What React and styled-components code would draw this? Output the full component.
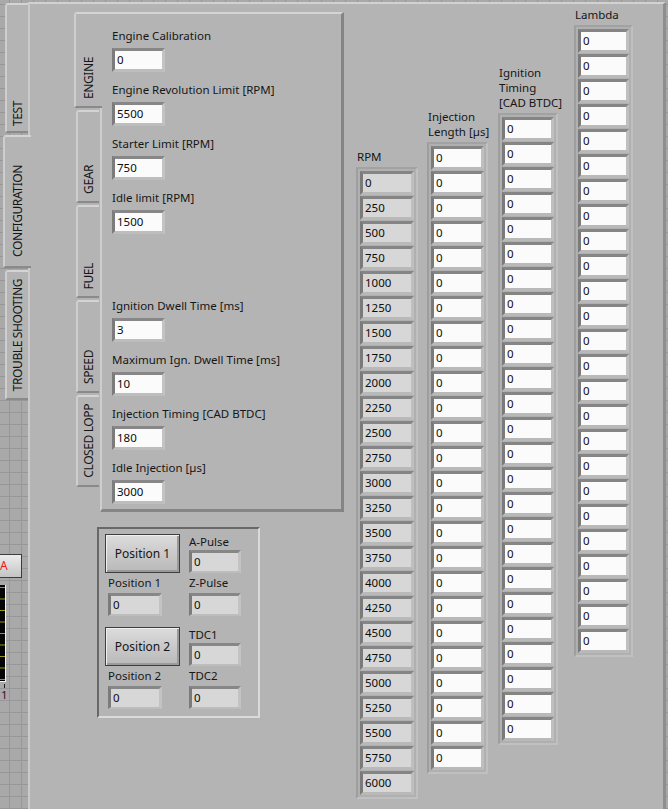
import React from 'react'
import styled, { createGlobalStyle } from 'styled-components'

const GlobalStyle = createGlobalStyle`
  html, body {
    margin: 0;
    padding: 0;
  }
  body {
    width: 668px;
    height: 809px;
    overflow: hidden;
    background-color: #a9a9a9;
    background-image:
      linear-gradient(#979797 1px, transparent 1px),
      linear-gradient(90deg, #979797 1px, transparent 1px);
    background-size: 12px 12px;
    background-position: 9px 4px;
    font-family: "Noto Sans", "Segoe UI", sans-serif;
    font-size: 11.5px;
    color: #161616;
  }
`

const Screen = styled.div`
  display: flex;
  width: 668px;
  height: 809px;
`

// left strip: outer tabs and the block diagram peeking out behind
const Side = styled.div`
  width: 28px;
  flex: none;
  display: flex;
  flex-direction: column;
  padding-top: 3px;
  box-sizing: border-box;
  position: relative;
  z-index: 1;
`

const Tab = styled.div`
  box-sizing: border-box;
  height: ${p => p.$h}px;
  margin: 0 ${p => (p.$active ? '-3px' : '0')} 2px ${p => (p.$active ? '3px' : '5px')};
  background: #b4b4b4;
  border-top: 2px solid #d4d4d4;
  border-left: 2px solid #cecece;
  border-bottom: 2px solid #8a8a8a;
  border-radius: 3px 0 0 2px;
  display: flex;
  flex-direction: column;
  justify-content: flex-end;
  align-items: center;
  padding-bottom: ${p => p.$pad || 6}px;
`

const TabText = styled.span`
  writing-mode: vertical-rl;
  transform: rotate(180deg);
  white-space: nowrap;
  line-height: 14px;
  font-size: 12px;
  letter-spacing: -0.4px;
`

// only the right end of this button shows, the rest is hidden behind the window edge
const RedButton = styled.div`
  margin-top: 152px;
  width: 22px;
  height: 24px;
  box-sizing: border-box;
  border: 1px solid #3c3c3c;
  border-left: none;
  background: linear-gradient(#ececec, #c4c4c4);
  color: #f01818;
  line-height: 22px;
  font-size: 12px;
  padding-left: 0;
`

const Graph = styled.div`
  margin-top: 7px;
  width: 5px;
  height: 96px;
  background-color: #050505;
  background-image: linear-gradient(#9c9a14 1px, transparent 1px);
  background-size: 5px 11.5px;
  background-position: 0 2px;
  border-right: 1px solid #f4f4f4;
  border-bottom: 1px solid #f4f4f4;
`

const Tick = styled.div`
  margin: 2px 0 0 4px;
  width: 1px;
  height: 4px;
  background: #222;
`

const TickLabel = styled.div`
  margin-left: 1px;
  line-height: 14px;
  color: #3a1030;
`

const MainPanel = styled.div`
  flex: 1;
  margin: 2px 2px 0 0;
  background: #b4b4b4;
  border-top: 2px solid #d2d2d2;
  border-left: 2px solid #cbcbcb;
  border-right: 3px solid #8e8e8e;
  display: flex;
  align-items: flex-start;
  padding-left: 44px;
`

const LeftCol = styled.div`
  margin-top: 8px;
  width: 270px;
  flex: none;
  display: flex;
  flex-direction: column;
`

const TabControl = styled.div`
  display: flex;
  height: 500px;
`

const InnerTabs = styled.div`
  width: 26px;
  flex: none;
  display: flex;
  flex-direction: column;
  position: relative;
  z-index: 1;
`

const InnerTab = styled(Tab)`
  margin: 0 ${p => (p.$active ? '-2px' : '1px')} 2px ${p => (p.$active ? '0' : '2px')};
`

const InnerPanel = styled.div`
  flex: 1;
  box-sizing: border-box;
  border-top: 2px solid #d4d4d4;
  border-left: 2px solid #cecece;
  border-right: 3px solid #858585;
  border-bottom: 3px solid #858585;
  padding: 14px 0 0 10px;
  display: grid;
  grid-auto-rows: 54px;
  align-content: start;
`

const Field = styled.div`
  display: flex;
  flex-direction: column;
  align-items: flex-start;
`

const Label = styled.div`
  line-height: 16px;
  white-space: nowrap;
  margin-bottom: ${p => p.$gap ?? 4}px;
`

const NumBox = styled.div`
  box-sizing: border-box;
  width: ${p => p.$w || 53}px;
  height: ${p => p.$h || 24}px;
  border-style: solid;
  border-width: 3px 3px ${p => (p.$h === 23 ? 2 : 3)}px 3px;
  border-color: #878787 #c3c3c3 #bdbdbd #7b7b7b;
  background: ${p => (p.$ind ? '#d7d7d7' : '#fbfbfb')};
  padding-left: 2px;
  line-height: 18px;
  color: #0c0c0c;
  font-size: 11.5px;
`

const PositionBox = styled.div`
  margin: 15px 0 0 23px;
  width: 163px;
  height: 191px;
  box-sizing: border-box;
  border: 2px solid;
  border-color: #686868 #dadada #dadada #686868;
  padding: 5px 0 0 6px;
  display: flex;
  flex-direction: column;
  gap: 11px;
`

const PairGrid = styled.div`
  display: grid;
  grid-template-columns: 75px 53px;
  grid-template-rows: 39px 43px;
  column-gap: 9px;
`

const Cell = styled.div`
  display: flex;
  flex-direction: column;
  justify-content: flex-end;
  padding-left: ${p => p.$indent || 0}px;
`

const PushButton = styled.div`
  box-sizing: border-box;
  border: 1px solid #3e3e3e;
  box-shadow: inset 1px 1px 0 #f0f0f0, inset -2px -2px 0 #9a9a9a;
  background: linear-gradient(#dcdcdc, #c6c6c6 60%, #b9b9b9);
  display: flex;
  align-items: center;
  justify-content: center;
  font-size: 12px;
`

const ArraysArea = styled.div`
  display: flex;
  align-items: flex-start;
  margin-left: 12px;
`

const ArrayCol = styled.div`
  display: flex;
  flex-direction: column;
  margin-top: ${p => p.$top}px;
  margin-left: ${p => p.$left || 0}px;
`

const ArrayLabel = styled.div`
  line-height: 15px;
  margin-bottom: 3px;
  padding-left: 1px;
  white-space: nowrap;
  width: 0;
`

const ArrayFrame = styled.div`
  border: 2px solid;
  border-color: #a2a2a2 #c0c0c0 #c0c0c0 #9e9e9e;
  background: #b0b0b0;
  padding: 2px;
  display: flex;
  flex-direction: column;
  gap: 1px;
`

const ArrayCell = styled(NumBox)`
  border-width: 3px 3px 3px 3px;
  border-color: #858585 #bfbfbf #b9b9b9 #7a7a7a;
`

const rpm = Array.from({ length: 25 }, (_, i) => i * 250)
const zeros = Array.from({ length: 25 }, () => 0)

const engineFields = [
  ['Engine Calibration', '0'],
  ['Engine Revolution Limit [RPM]', '5500'],
  ['Starter Limit [RPM]', '750'],
  ['Idle limit [RPM]', '1500'],
  null,
  ['Ignition Dwell Time [ms]', '3'],
  ['Maximum Ign. Dwell Time [ms]', '10'],
  ['Injection Timing [CAD BTDC]', '180'],
  ['Idle Injection [µs]', '3000'],
]

const innerTabs = [
  ['ENGINE', 96, true, 7],
  ['GEAR', 93, false, 7],
  ['FUEL', 93, false, 7],
  ['SPEED', 93, false, 7],
  ['CLOSED LOPP', 92, false, 7],
]

const arrays = [
  { label: ['RPM'], top: 145, left: 0, w: 54, ind: true, values: rpm },
  { label: ['Injection', 'Length [µs]'], top: 105, left: 9, w: 53, values: zeros },
  { label: ['Ignition', 'Timing', '[CAD BTDC]'], top: 61, left: 10, w: 52, values: zeros },
  { label: ['Lambda'], top: 3, left: 16, w: 51, values: zeros },
]

function PositionPair({ n, topLabel, topValue, bottomLabel }) {
  return (
    <PairGrid>
      <PushButton>Position {n}</PushButton>
      <Cell>
        <Label $gap={0}>{topLabel}</Label>
        <NumBox $w={52} $h={23} $ind>{topValue}</NumBox>
      </Cell>
      <Cell $indent={3}>
        <Label $gap={2}>Position {n}</Label>
        <NumBox $w={54} $h={23} $ind>0</NumBox>
      </Cell>
      <Cell>
        <Label $gap={2}>{bottomLabel}</Label>
        <NumBox $w={52} $h={23} $ind>0</NumBox>
      </Cell>
    </PairGrid>
  )
}

export default function App() {
  return (
    <>
      <GlobalStyle />
      <Screen>
        <Side>
          <Tab $h={130} $pad={5}><TabText>TEST</TabText></Tab>
          <Tab $h={133} $active $pad={9}><TabText>CONFIGURATION</TabText></Tab>
          <Tab $h={130} $pad={7}><TabText>TROUBLE SHOOTING</TabText></Tab>
          <RedButton>A</RedButton>
          <Graph />
          <Tick />
          <TickLabel>1</TickLabel>
        </Side>

        <MainPanel>
          <LeftCol>
            <TabControl>
              <InnerTabs>
                {innerTabs.map(([name, h, active, pad]) => (
                  <InnerTab key={name} $h={h} $active={active} $pad={pad}>
                    <TabText>{name}</TabText>
                  </InnerTab>
                ))}
              </InnerTabs>
              <InnerPanel>
                {engineFields.map((f, i) =>
                  f ? (
                    <Field key={i}>
                      <Label>{f[0]}</Label>
                      <NumBox>{f[1]}</NumBox>
                    </Field>
                  ) : (
                    <div key={i} />
                  )
                )}
              </InnerPanel>
            </TabControl>

            <PositionBox>
              <PositionPair n={1} topLabel="A-Pulse" topValue="0" bottomLabel="Z-Pulse" />
              <PositionPair n={2} topLabel="TDC1" topValue="0" bottomLabel="TDC2" />
            </PositionBox>
          </LeftCol>

          <ArraysArea>
            {arrays.map((a, i) => (
              <ArrayCol key={i} $top={a.top} $left={a.left}>
                <ArrayLabel>
                  {a.label.map((l, j) => (
                    <div key={j}>{l}</div>
                  ))}
                </ArrayLabel>
                <ArrayFrame>
                  {a.values.map((v, j) => (
                    <ArrayCell key={j} $w={a.w} $ind={a.ind}>{v}</ArrayCell>
                  ))}
                </ArrayFrame>
              </ArrayCol>
            ))}
          </ArraysArea>
        </MainPanel>
      </Screen>
    </>
  )
}
